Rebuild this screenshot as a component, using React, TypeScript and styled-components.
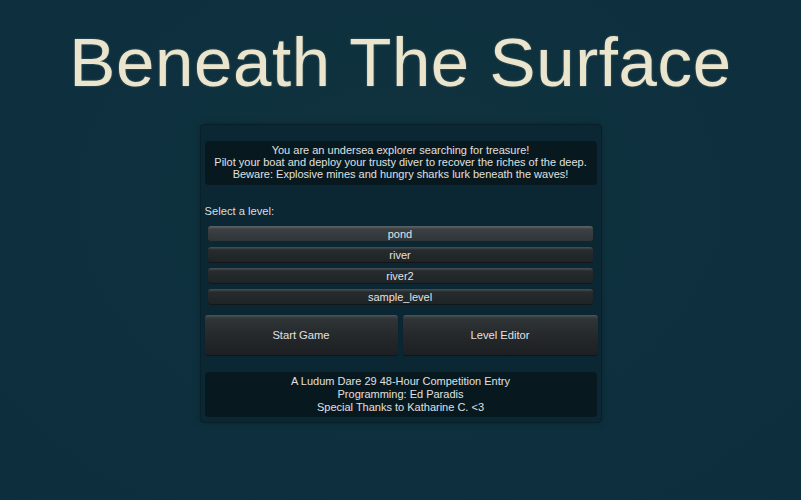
import React from "react";
import styled, { createGlobalStyle } from "styled-components";

const GlobalStyle = createGlobalStyle`
	html, body {
		margin: 0;
		padding: 0;
		background: #0e303e;
	}
	body {
		font-family: "Liberation Sans", Arial, sans-serif;
	}
`;

const Screen = styled.main`
	width: 801px;
	height: 500px;
	box-sizing: border-box;
	background: radial-gradient(ellipse at 50% 40%, #10333f 0%, #0e303e 60%, #0d2e3c 100%);
	display: flex;
	flex-direction: column;
	align-items: center;
	padding-top: 22px;
	overflow: hidden;
`;

const Title = styled.h1`
	margin: 0;
	font-family: "Liberation Sans", Arial, sans-serif;
	font-weight: 400;
	font-size: 69px;
	line-height: 82px;
	letter-spacing: 0.6px;
	color: #ebe5cd;
	text-shadow: 0 0 2px rgba(235, 229, 205, 0.35);
`;

const Panel = styled.section`
	margin-top: 20px;
	width: 402px;
	box-sizing: border-box;
	padding: 16px 4px 5px;
	background: #0b2733;
	border: 1px solid #08202a;
	border-radius: 4px;
	box-shadow: 0 0 6px rgba(0, 0, 0, 0.25);
	display: flex;
	flex-direction: column;
	color: #dedede;
	font-size: 11px;
`;

const InfoBox = styled.div`
	background: #07191f;
	border-radius: 4px;
	padding: 3px 6px 5px;
	text-align: center;
	line-height: 12px;
	font-size: 11px;
	color: #e0e0e0;
`;

const Label = styled.div`
	margin-top: 19px;
	font-size: 11.2px;
	line-height: 14px;
`;

const LevelList = styled.div`
	margin: 8px 4px 0 3px;
	display: flex;
	flex-direction: column;
	gap: 5px;
	padding: 0;
`;

const LevelButton = styled.button<{ $active?: boolean }>`
	height: 16px;
	padding: 0;
	border: none;
	border-radius: 3px;
	font-family: "Liberation Sans", Arial, sans-serif;
	font-size: 11px;
	color: #e2e2e2;
	cursor: pointer;
	background: ${(p) =>
		p.$active
			? "linear-gradient(180deg, #5e6468 0px, #4a5054 2px, #3b4043 3px, #2f3437 100%)"
			: "linear-gradient(180deg, #4a5053 0px, #33383b 2px, #262b2e 3px, #1e2326 100%)"};
	box-shadow: inset 0 -1px 0 rgba(0, 0, 0, 0.35);
`;

const ActionRow = styled.div`
	margin-top: 10px;
	display: grid;
	grid-template-columns: 193px 195px;
	gap: 5px;
`;

const ActionButton = styled.button`
	height: 40px;
	border: none;
	border-radius: 3px;
	font-family: "Liberation Sans", Arial, sans-serif;
	font-size: 11.2px;
	color: #e2e2e2;
	cursor: pointer;
	background: linear-gradient(180deg, #51575a 0px, #3b4043 2px, #2f3437 4px, #25292c 50%, #1c2022 100%);
	box-shadow: 0 1px 1px rgba(0, 0, 0, 0.4);
`;

const Credits = styled.div`
	margin-top: 17px;
	background: #07191f;
	border-radius: 4px;
	padding: 3px 6px 3px;
	text-align: center;
	line-height: 13px;
	font-size: 11px;
	color: #e0e0e0;
`;

const levels = ["pond", "river", "river2", "sample_level"];

export default function App() {
	return (
		<>
			<GlobalStyle />
			<Screen>
				<Title>Beneath The Surface</Title>
				<Panel>
					<InfoBox>
						You are an undersea explorer searching for treasure!
						<br />
						Pilot your boat and deploy your trusty diver to recover the riches of the deep.
						<br />
						Beware: Explosive mines and hungry sharks lurk beneath the waves!
					</InfoBox>
					<Label>Select a level:</Label>
					<LevelList>
						{levels.map((name, i) => (
							<LevelButton key={name} $active={i === 0}>
								{name}
							</LevelButton>
						))}
					</LevelList>
					<ActionRow>
						<ActionButton>Start Game</ActionButton>
						<ActionButton>Level Editor</ActionButton>
					</ActionRow>
					<Credits>
						A Ludum Dare 29 48-Hour Competition Entry
						<br />
						Programming: Ed Paradis
						<br />
						Special Thanks to Katharine C. &lt;3
					</Credits>
				</Panel>
			</Screen>
		</>
	);
}
